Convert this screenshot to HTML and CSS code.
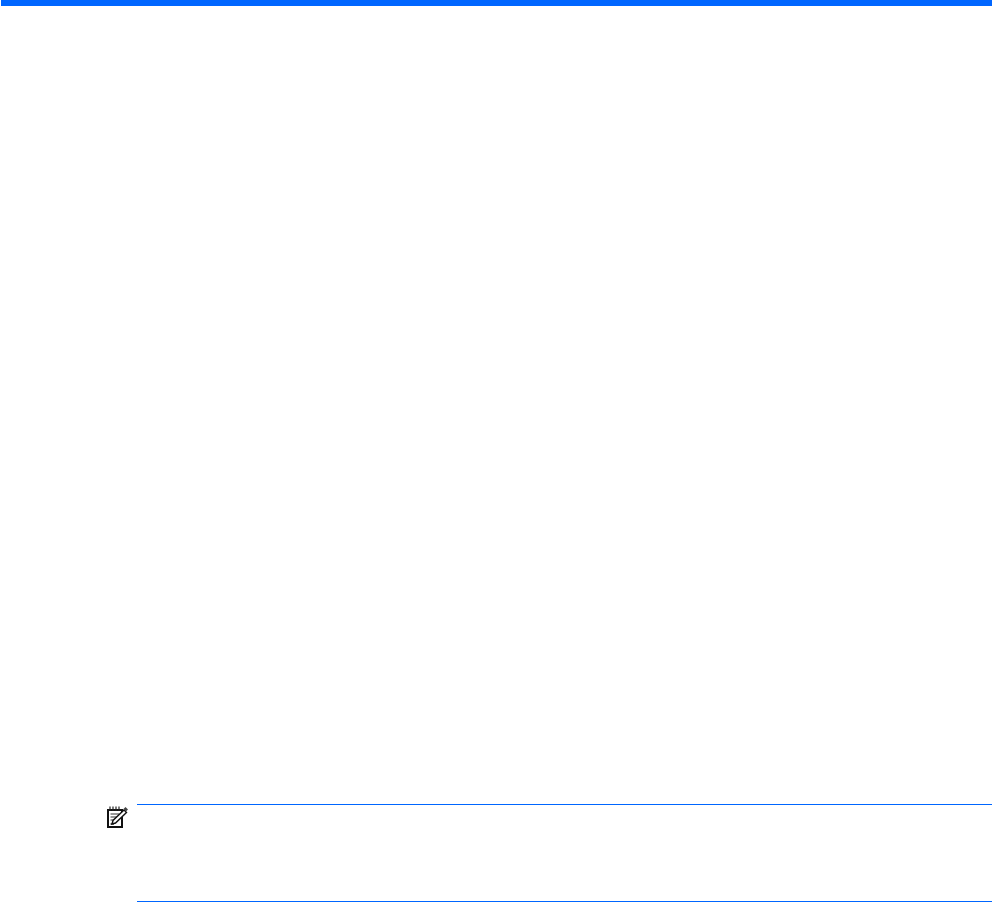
FILE: index.html
```html
<!DOCTYPE html>
<html lang="en">
<head>
<meta charset="utf-8">
<title>Note</title>
<link rel="stylesheet" href="styles.css">
</head>
<body>
<div class="top-bar"></div>
<section class="note">
<svg class="note-icon" width="21" height="22" viewBox="0 0 21 22" fill="none" aria-hidden="true">
<path d="M1 4H15V21H1Z" fill="#fff" stroke="#111" stroke-width="2"/>
<path d="M3 0.5V5M6 0.5V5M9 0.5V5M12 0.5V5" stroke="#222" stroke-width="1.2"/>
<path d="M3.5 8H12M3.5 11H10M3.5 14H7.5" stroke="#333" stroke-width="1.2"/>
<path d="M5 18L6 14.5L17 4L19.5 6.5L8.5 17Z" fill="#fff" stroke="#111" stroke-width="1.4"/>
<path d="M16.5 3L18.5 1L21 3.5L19 5.5Z" fill="#444"/>
<path d="M3.5 18H7" stroke="#111" stroke-width="1.2"/>
</svg>
<div class="note-body"></div>
</section>
</body>
</html>
```
FILE: styles.css
```css
html, body {
  margin: 0;
  padding: 0;
  background: #fff;
}
body {
  height: 902px;
  overflow: hidden;
  display: flex;
  flex-direction: column;
}
.top-bar {
  height: 6px;
  margin: 0 1px;
  background: #0066ff;
}
.note {
  margin-top: 798px;
  padding: 0 0 0 107px;
  margin-right: 1px;
  display: flex;
  gap: 9px;
  align-items: flex-start;
}
.note-icon {
  flex: none;
  margin-top: 2px;
}
.note-body {
  flex: 1;
  height: 96px;
  border-top: 1px solid #0066ff;
  border-bottom: 1px solid #0066ff;
}
```
